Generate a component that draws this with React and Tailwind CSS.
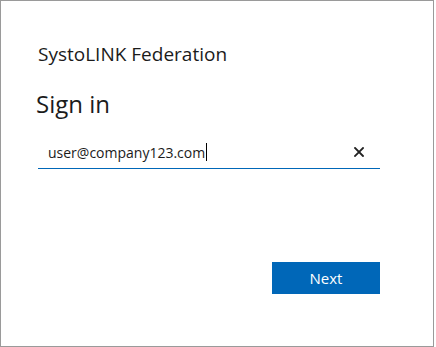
import React from 'react';

export default function App() {
  return (
    <div className="w-[436px] h-[347px] bg-white" style={{ fontFamily: '"Open Sans", "Noto Sans", sans-serif' }}>
      <div className="w-[434px] h-[347px] border border-[#9a9a9a] flex flex-col pl-[37px] pr-[53px] pt-[40px]">
        <div className="text-[19px] leading-[26px] text-[#1b1b1b]">SystoLINK Federation</div>
        <h1 className="mt-[21px] -ml-[2px] text-[24px] leading-[32px] text-[#1b1b1b]">Sign in</h1>

        {/* Email field */}
        <div className="mt-[16px] flex items-center h-[33px] border-b border-[#0067b8] pl-[10px] pr-[16px]">
          <span className="text-[14px] text-[#1b1b1b]">user@company123.com</span>
          <span className="ml-[1px] w-px h-[18px] bg-black" />
          <svg className="ml-auto" width="10" height="10" viewBox="0 0 10 10">
            <path d="M1 1 L9 9 M9 1 L1 9" stroke="#222" strokeWidth="1.8" strokeLinecap="square" />
          </svg>
        </div>

        <div className="mt-auto mb-[52px] flex justify-end">
          <button className="w-[108px] h-[32px] bg-[#0067b8] text-white text-[15px]">Next</button>
        </div>
      </div>
    </div>
  );
}
